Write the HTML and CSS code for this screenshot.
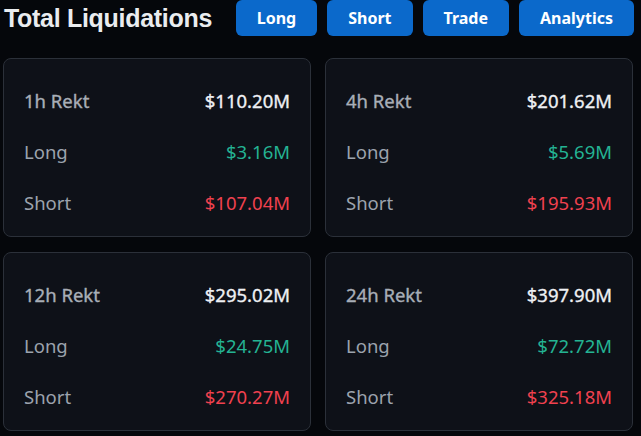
FILE: index.html
```html
<!DOCTYPE html>
<html>
<head>
<meta charset="utf-8">
<link rel="stylesheet" href="styles.css">
</head>
<body>
<div class="page">
  <header class="header">
    <h1 class="title">Total Liquidations</h1>
    <nav class="nav">
      <button class="btn">Long</button>
      <button class="btn">Short</button>
      <button class="btn">Trade</button>
      <button class="btn">Analytics</button>
    </nav>
  </header>
  <main class="grid">
    <section class="card">
      <div class="row"><span class="label strong">1h Rekt</span><span class="value strong">$110.20M</span></div>
      <div class="row"><span class="label">Long</span><span class="value up">$3.16M</span></div>
      <div class="row"><span class="label">Short</span><span class="value down">$107.04M</span></div>
    </section>
    <section class="card">
      <div class="row"><span class="label strong">4h Rekt</span><span class="value strong">$201.62M</span></div>
      <div class="row"><span class="label">Long</span><span class="value up">$5.69M</span></div>
      <div class="row"><span class="label">Short</span><span class="value down">$195.93M</span></div>
    </section>
    <section class="card">
      <div class="row"><span class="label strong">12h Rekt</span><span class="value strong">$295.02M</span></div>
      <div class="row"><span class="label">Long</span><span class="value up">$24.75M</span></div>
      <div class="row"><span class="label">Short</span><span class="value down">$270.27M</span></div>
    </section>
    <section class="card">
      <div class="row"><span class="label strong">24h Rekt</span><span class="value strong">$397.90M</span></div>
      <div class="row"><span class="label">Long</span><span class="value up">$72.72M</span></div>
      <div class="row"><span class="label">Short</span><span class="value down">$325.18M</span></div>
    </section>
  </main>
</div>
</body>
</html>
```
FILE: styles.css
```css
* { box-sizing: border-box; }
html, body { margin: 0; padding: 0; background: #05070b; }
body { font-family: "Noto Sans", "Liberation Sans", sans-serif; color: #eaecef; }
.page { width: 641px; height: 436px; overflow: hidden; }
.header {
  display: flex;
  align-items: center;
  height: 36px;
  padding: 0 7px 0 4px;
}
.title {
  margin: 0 auto 0 0;
  font-family: "Liberation Sans", Arial, sans-serif;
  font-size: 25px;
  font-weight: 700;
  letter-spacing: -0.3px;
  color: #eaecef;
}
.nav { display: flex; gap: 10px; height: 36px; }
.btn {
  height: 36px;
  padding: 0 21px;
  border: 0;
  border-radius: 6px;
  background: #0b69cb;
  color: #ffffff;
  font-family: "Noto Sans", sans-serif;
  font-size: 16px;
  font-weight: 700;
}
.grid {
  display: grid;
  grid-template-columns: 308px 308px;
  column-gap: 14px;
  row-gap: 15px;
  padding: 22px 0 0 3px;
}
.card {
  height: 179px;
  padding: 16px 20px 8px;
  background: #0e1118;
  border: 1px solid #2b3039;
  border-radius: 8px;
}
.row {
  display: flex;
  justify-content: space-between;
  height: 51px;
  line-height: 51px;
  font-size: 18.5px;
}
.label { color: #9ca3ad; }
.strong { -webkit-text-stroke: 0.35px currentColor; }
.label.strong { color: #a8aeb7; }
.value.strong { color: #eef0f3; }
.up { color: #24b393; }
.down { color: #f0414f; }
```
